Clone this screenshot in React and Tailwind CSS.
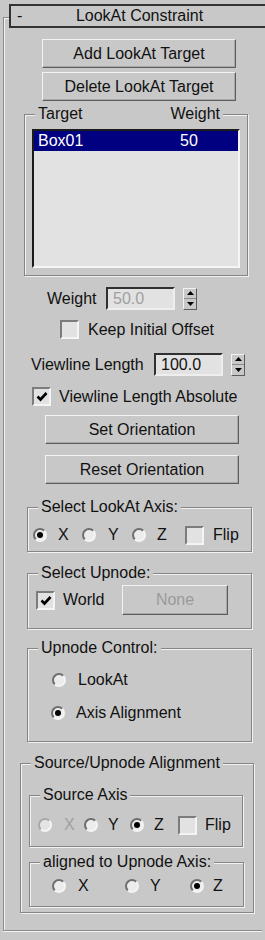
import React from "react";

// 3ds Max style LookAt Constraint rollout

function Button({ children, className = "", disabled = false }) {
  return (
    <button
      type="button"
      className={`flex shrink-0 items-center justify-center border border-t-[#f2f2f2] border-l-[#f2f2f2] border-r-[#5c5c5c] border-b-[#5c5c5c] shadow-[inset_-1px_-1px_0_#a8a8a8] leading-none ${
        disabled ? "text-[#9a9a9a]" : "text-[#111]"
      } ${className}`}
    >
      {children}
    </button>
  );
}

function Group({ label, className = "", children }) {
  return (
    <fieldset
      className={`shrink-0 border border-[#858585] shadow-[inset_1px_1px_0_#f2f2f2,1px_1px_0_#f2f2f2] ${className}`}
    >
      <legend className="ml-[10px] bg-[#c8c8c8] px-[3px] leading-[18px]">
        {label}
      </legend>
      {children}
    </fieldset>
  );
}

function Radio({ checked = false, disabled = false }) {
  return (
    <span
      className={`flex h-[14px] w-[14px] shrink-0 items-center justify-center rounded-full border-2 ${
        disabled
          ? "border-t-[#a8a8a8] border-l-[#a8a8a8] border-b-[#f4f4f4] border-r-[#f4f4f4] bg-[#e4e4e4]"
          : "border-t-[#6e6e6e] border-l-[#6e6e6e] border-b-[#f4f4f4] border-r-[#f4f4f4] bg-[#ececec]"
      }`}
    >
      {checked && <span className="h-[6px] w-[6px] rounded-full bg-black" />}
    </span>
  );
}

function Check({ checked = false }) {
  return (
    <span className="flex h-[19px] w-[19px] shrink-0 items-center justify-center border-2 border-t-[#7c7c7c] border-l-[#7c7c7c] border-b-[#f4f4f4] border-r-[#f4f4f4] bg-[#e2e2e2]">
      {checked && (
        <svg width="12" height="11" viewBox="0 0 12 11">
          <path d="M1.5 5.5 L4.5 8.5 L10.5 2" fill="none" stroke="#000" strokeWidth="2.6" />
        </svg>
      )}
    </span>
  );
}

function Spinner() {
  return (
    <div className="flex h-[22px] w-[14px] shrink-0 flex-col border border-t-[#f2f2f2] border-l-[#f2f2f2] border-r-[#5c5c5c] border-b-[#5c5c5c]">
      <div className="flex flex-1 items-center justify-center border-b border-[#8a8a8a]">
        <svg width="7" height="4" viewBox="0 0 7 4">
          <path d="M3.5 0 L7 4 L0 4 Z" fill="#000" />
        </svg>
      </div>
      <div className="flex flex-1 items-center justify-center">
        <svg width="7" height="4" viewBox="0 0 7 4">
          <path d="M0 0 L7 0 L3.5 4 Z" fill="#000" />
        </svg>
      </div>
    </div>
  );
}

function NumField({ value, disabled = false }) {
  return (
    <div
      className={`h-[23px] w-[69px] shrink-0 border-2 border-t-[#303030] border-l-[#303030] border-b-[#eeeeee] border-r-[#eeeeee] bg-[#e2e2e2] pl-[5px] leading-[19px] ${
        disabled ? "text-[#a0a0a0]" : "text-[#111]"
      }`}
    >
      {value}
    </div>
  );
}

export default function App() {
  return (
    <div className="h-[940px] w-[265px] overflow-hidden bg-[#c8c8c8] pt-[17px] font-['Liberation_Sans',Arial,sans-serif] text-[16px] leading-[18px] text-[#111]">
      <div className="ml-[3px] flex w-[259px] flex-col items-start border-b border-l border-t border-[#8a8a8a] pb-[17px] shadow-[inset_1px_1px_0_#f2f2f2,0_1px_0_#f2f2f2]">
        {/* title bar */}
        <div className="-mt-[14px] ml-[5px] grid h-[24px] w-[261px] shrink-0 grid-cols-[1fr_auto_1fr] items-center border-2 border-[#333] bg-[#c8c8c8]">
          <span className="pl-[6px]">-</span>
          <span>LookAt Constraint</span>
          <span />
        </div>

        <Button className="ml-[38px] mt-[11px] h-[29px] w-[194px]">Add LookAt Target</Button>
        <Button className="ml-[38px] mt-[4px] h-[29px] w-[194px]">Delete LookAt Target</Button>

        {/* target list */}
        <fieldset className="ml-[20px] mt-[4px] w-[224px] shrink-0 border border-[#858585] pb-[7px] shadow-[inset_1px_1px_0_#f2f2f2,1px_1px_0_#f2f2f2]">
          <legend className="ml-[10px] bg-[#c8c8c8] px-[3px] leading-[18px]">
            <div className="flex w-[182px] justify-between">
              <span>Target</span>
              <span>Weight</span>
            </div>
          </legend>
          <div className="ml-[7px] mt-[6px] h-[139px] w-[208px] border-2 border-t-[#1a1a1a] border-l-[#1a1a1a] border-b-[#f6f6f6] border-r-[#f6f6f6] bg-[#e2e2e2]">
            <div className="flex h-[20px] items-center bg-[#000080] pl-[4px] text-white">
              <span className="w-[142px]">Box01</span>
              <span>50</span>
            </div>
          </div>
        </fieldset>

        <div className="mt-[11px] flex h-[23px] items-center">
          <span className="ml-[43px] w-[59px]">Weight</span>
          <NumField value="50.0" disabled />
          <span className="ml-[8px]">
            <Spinner />
          </span>
        </div>

        <div className="ml-[56px] mt-[10px] flex h-[19px] items-center">
          <Check />
          <span className="ml-[9px]">Keep Initial Offset</span>
        </div>

        <div className="mt-[14px] flex h-[23px] items-center">
          <span className="ml-[27px] w-[123px]">Viewline Length</span>
          <NumField value="100.0" />
          <span className="ml-[8px]">
            <Spinner />
          </span>
        </div>

        <div className="ml-[28px] mt-[11px] flex h-[19px] items-center">
          <Check checked />
          <span className="ml-[8px]">Viewline Length Absolute</span>
        </div>

        <Button className="ml-[41px] mt-[9px] h-[29px] w-[194px]">Set Orientation</Button>
        <Button className="ml-[41px] mt-[11px] h-[29px] w-[194px]">Reset Orientation</Button>

        <Group label="Select LookAt Axis:" className="ml-[23px] mt-[14px] w-[225px] pb-[6px]">
          <div className="ml-[5px] mt-[9px] flex h-[20px] items-center">
            <Radio checked />
            <span className="ml-[11px] w-[24px]">X</span>
            <Radio />
            <span className="ml-[12px] w-[24px]">Y</span>
            <Radio />
            <span className="ml-[11px] w-[28px]">Z</span>
            <Check />
            <span className="ml-[9px]">Flip</span>
          </div>
        </Group>

        <Group label="Select Upnode:" className="ml-[23px] mt-[12px] w-[225px] pb-[13px]">
          <div className="ml-[8px] mt-[3px] flex h-[30px] items-center">
            <Check checked />
            <span className="ml-[8px] w-[59px]">World</span>
            <Button disabled className="h-[30px] w-[106px]">None</Button>
          </div>
        </Group>

        <Group label="Upnode Control:" className="ml-[23px] mt-[10px] w-[225px] pb-[18px]">
          <div className="ml-[24px] mt-[13px] flex h-[20px] items-center">
            <Radio />
            <span className="ml-[12px]">LookAt</span>
          </div>
          <div className="ml-[23px] mt-[13px] flex h-[20px] items-center">
            <Radio checked />
            <span className="ml-[11px]">Axis Alignment</span>
          </div>
        </Group>

        <Group label="Source/Upnode Alignment" className="ml-[16px] mt-[12px] w-[234px] pb-[5px]">
          <Group label="Source Axis" className="ml-[8px] mt-[14px] w-[214px] pb-[11px]">
            <div className="ml-[8px] mt-[11px] flex h-[20px] items-center">
              <Radio disabled />
              <span className="ml-[12px] w-[20px] text-[#a0a0a0]">X</span>
              <Radio />
              <span className="ml-[10px] w-[22px]">Y</span>
              <Radio checked />
              <span className="ml-[10px] w-[24px]">Z</span>
              <Check />
              <span className="ml-[8px]">Flip</span>
            </div>
          </Group>
          <Group label="aligned to Upnode Axis:" className="ml-[8px] mt-[6px] w-[215px] pb-[10px]">
            <div className="ml-[22px] mt-[5px] flex h-[20px] items-center">
              <Radio />
              <span className="ml-[12px] w-[47px]">X</span>
              <Radio />
              <span className="ml-[11px] w-[40px]">Y</span>
              <Radio checked />
              <span className="ml-[9px]">Z</span>
            </div>
          </Group>
        </Group>
      </div>
    </div>
  );
}
